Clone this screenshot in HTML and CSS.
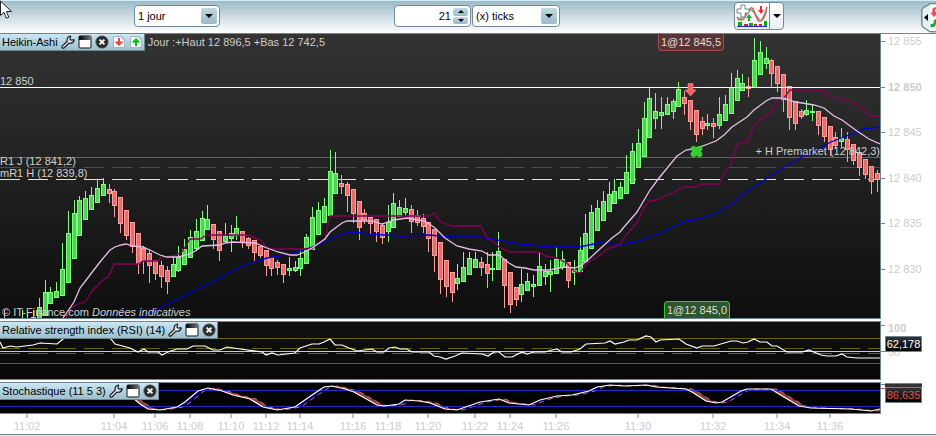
FILE: index.html
```html
<!DOCTYPE html>
<html lang="fr">

<head>
    <meta charset="UTF-8" />
    <meta name="viewport" content="width=device-width, initial-scale=1.0" />
    <title>Graphique 21 ticks</title>
    <link rel="stylesheet" href="styles.css">
</head>

<body>
    <svg class="symbols" aria-hidden="true">
        <defs>
            <linearGradient id="gloss" x1="0" y1="0" x2="1" y2="0">
                <stop offset="0" stop-color="#000" />
                <stop offset="1" stop-color="#777" />
            </linearGradient>
            <symbol id="wrench" viewBox="0 0 14 14">
                <path d="M1.2 11.2 6.2 6.2C5.8 3.8 7 1.6 9.3 1L9.6 1.6 8.8 3.8 10.2 5.2 12.8 4.6 13.2 5.2C12.4 7.4 10.4 8.6 8 8L3 13C1.6 13.6.4 12.4 1.2 11.2Z" fill="#dceaf0" stroke="#111" stroke-width="1.1" />
            </symbol>
            <symbol id="window" viewBox="0 0 14 14">
                <rect x="1" y="1" width="12" height="12" rx="1" fill="#fff" stroke="#111" />
                <rect x="1" y="1" width="12" height="4" fill="url(#gloss)" />
            </symbol>
            <symbol id="close" viewBox="0 0 14 14">
                <circle cx="7" cy="7" r="6.3" fill="#2b2b2b" stroke="#777" stroke-width=".6" />
                <path d="M4.6 4.6 9.4 9.4M9.4 4.6 4.6 9.4" stroke="#fff" stroke-width="2" />
            </symbol>
            <symbol id="sell" viewBox="0 0 14 14">
                <path d="M1.5 1.5H10.5L12.5 3.5V12.5H1.5Z" fill="#f4f8fa" stroke="#9db5c5" />
                <path d="M10 1.5V4H12.5" fill="none" stroke="#9db5c5" />
                <path d="M6 3H8V6.5H11.5L7 11 2.5 6.5H6Z" fill="#e84545" />
            </symbol>
            <symbol id="buy" viewBox="0 0 14 14">
                <path d="M1.5 1.5H10.5L12.5 3.5V12.5H1.5Z" fill="#f4f8fa" stroke="#9db5c5" />
                <path d="M10 1.5V4H12.5" fill="none" stroke="#9db5c5" />
                <path d="M6 11H8V7.5H11.5L7 3 2.5 7.5H6Z" fill="#00c400" />
            </symbol>
        </defs>
    </svg>

    <header class="toolbar">
        <span class="combo combo-period">
            <select aria-label="Période">
                <option>1 jour</option>
            </select>
        </span>
        <span class="spinner">
            <input type="text" value="21" aria-label="Nombre de ticks" />
            <span class="spinner-buttons">
                <button type="button" aria-label="Augmenter"></button>
                <button type="button" aria-label="Diminuer"></button>
            </span>
        </span>
        <span class="combo combo-unit">
            <select aria-label="Unité">
                <option>(x) ticks</option>
            </select>
        </span>
        <span class="indicator">
            <button type="button" aria-label="Ajouter un indicateur">
                <svg width="34" height="26" viewBox="0 0 34 26">
                    <path d="M3 17C8 16 10 7 15 7S22 17 26 17 30 9 32 8" fill="none" stroke="#4aa84a" stroke-width="1.5" />
                    <path d="M15 7C20 8 21 19 25 18S30 12 32 7L25 17Z" fill="#c5e8c5" />
                    <path d="M2 14C7 21 10 14 13 9S17 3 19 8 23 20 26 18 30 10 32 4" fill="none" stroke="#d95b62" stroke-width="1.5" />
                    <path d="M6 2H10V6H14V10H10V14H6V10H2V6H6Z" fill="#fff" stroke="#6f8997" />
                    <path d="M13 18V15H11L14 11 17 15H15V18Z" fill="#12b912" />
                    <path d="M25 3H27V7H29L26 11 23 7H25Z" fill="#e52b34" />
                    <path d="M3 19H7V23H3ZM14 20H18V23H14ZM29 18H32V23H29Z" fill="#00b400" />
                    <path d="M9 21H13V23H9ZM19 21H22V23H19ZM24 21H27V23H24Z" fill="#d22" />
                    <path d="M2 23.500H32" stroke="#2525d8" />
                </svg>
            </button>
            <button type="button" class="indicator-more" aria-label="Plus"></button>
        </span>
        <button type="button" class="side-tab" aria-label="Ouvrir le panneau d'ordres">
            <svg width="15" height="30" viewBox="0 0 15 30">
                <path d="M15 .8H9L2 5Q.8 6 .8 8V21Q.8 23 2 24L9 28.8H15" fill="#e4f0f4" stroke="#748d98" stroke-width="1.4" />
                <path d="M9 1.5H15V28H9Z" fill="#f7fbfc" />
                <path d="M7 11V18L3 14.500Z" fill="#000" />
                <path d="M15 4Q10 5 11.500 9L9.500 10 13 14 15 12V9Q13 8 15 6Z" fill="#e8525c" />
                <path d="M15 16 12 18 13 19Q13 21 9.500 21V24Q14 25 15 21Z" fill="#12b030" />
            </svg>
        </button>
        <svg class="cursor" width="13" height="20" viewBox="0 0 13 20" aria-hidden="true">
            <path d="M.5 1V15.500L4 12.300 6.300 18.200 8.800 17.200 6.400 11.500H11.500Z" fill="#fff" stroke="#222" />
        </svg>
    </header>

    <main>
        <section class="panel price">
            <div class="plot">
                <svg class="drawing">
                    <g id="levels"></g>
                    <svg id="pricePlot" width="100%" height="100%" viewBox="0 34 880 284" preserveAspectRatio="none"></svg>
                    <g class="labels">
                        <text x="0" y="51">12 850</text>
                        <text x="0" y="131">R1 J (12 841,2)</text>
                        <text x="0" y="143">mR1 H (12 839,8)</text>
                        <text x="100%" y="121" text-anchor="end">+ H Premarket (12 842,3)</text>
                    </g>
                </svg>
                <div class="legend">
                    <span>Heikin-Ashi</span>
                    <button type="button" aria-label="Configurer"><svg><use href="#wrench" /></svg></button>
                    <button type="button" aria-label="Agrandir"><svg><use href="#window" /></svg></button>
                    <button type="button" aria-label="Fermer"><svg><use href="#close" /></svg></button>
                    <button type="button" aria-label="Vendre"><svg><use href="#sell" /></svg></button>
                    <button type="button" aria-label="Acheter"><svg><use href="#buy" /></svg></button>
                    <p class="day-range">Jour :+Haut 12 896,5 +Bas 12 742,5</p>
                </div>
                <span class="order order-sell">1@12 845,5</span>
                <span class="order order-buy">1@12 845,0</span>
                <p class="credit">© IT-Finance.com <em>Données indicatives</em></p>
            </div>
            <svg class="scale" id="priceScale"></svg>
        </section>

        <section class="panel rsi">
            <div class="plot">
                <svg class="drawing" id="rsiPlot" viewBox="0 322 880 57" preserveAspectRatio="none"></svg>
                <div class="legend">
                    <span>Relative strength index (RSI) (14)</span>
                    <button type="button" aria-label="Configurer"><svg><use href="#wrench" /></svg></button>
                    <button type="button" aria-label="Agrandir"><svg><use href="#window" /></svg></button>
                    <button type="button" aria-label="Fermer"><svg><use href="#close" /></svg></button>
                </div>
            </div>
            <div class="side">
                <svg class="scale" id="rsiScale"></svg>
                <output class="value">62,178</output>
            </div>
        </section>

        <section class="panel stoch">
            <div class="plot">
                <svg class="drawing" id="stochPlot" viewBox="0 383 880 30" preserveAspectRatio="none"></svg>
                <div class="legend">
                    <span>Stochastique (11 5 3)</span>
                    <button type="button" aria-label="Configurer"><svg><use href="#wrench" /></svg></button>
                    <button type="button" aria-label="Agrandir"><svg><use href="#window" /></svg></button>
                    <button type="button" aria-label="Fermer"><svg><use href="#close" /></svg></button>
                </div>
            </div>
            <div class="side">
                <svg class="scale" id="stochScale"></svg>
                <output class="value">86,635</output>
            </div>
        </section>

        <svg class="time-scale" id="timeScale"></svg>
    </main>
    <footer></footer>

    <script src="chart.js"></script>
</body>

</html>
```

FILE: styles.css
```css
body {
    margin: 0;
    background: #fff;
    font-family: "Liberation Sans", Arial, sans-serif;
    font-size: 11px;
    overflow: hidden;
}

p {
    margin: 0;
}

button {
    padding: 0;
    border: none;
    background: none;
    cursor: pointer;
}

.symbols {
    position: absolute;
    width: 0;
    height: 0;
}

/* toolbar */
.toolbar {
    position: relative;
    display: flex;
    align-items: flex-start;
    box-sizing: border-box;
    height: 34px;
    padding: 1px 0 0 134px;
    border-top: 1px solid #d3edf8;
    border-bottom: 1px solid #6c878f;
    background: linear-gradient(#9cbac8, #fff);
}

.combo,
.spinner {
    position: relative;
    display: flex;
    box-sizing: border-box;
    height: 22px;
    margin-top: 3px;
    border: 1px solid #74899a;
    border-radius: 4px;
    background: #fff;
}

.combo-period {
    width: 86px;
}

.combo-unit {
    width: 88px;
    margin-left: 1px;
}

.combo select,
.spinner input {
    width: 100%;
    padding: 0 3px;
    border: none;
    background: none;
    appearance: none;
    color: #000;
    font: 11px "Liberation Sans", Arial, sans-serif;
    outline: none;
}

.combo::after {
    content: "";
    position: absolute;
    top: 2px;
    right: 2px;
    width: 16px;
    height: 16px;
    border-radius: 2px;
    background: linear-gradient(#bcd9e4, #9bbac7);
    pointer-events: none;
}

.combo::before {
    content: "";
    position: absolute;
    z-index: 1;
    top: 8px;
    right: 6px;
    border: 4px solid transparent;
    border-top-color: #000;
    border-bottom: none;
    pointer-events: none;
}

.spinner {
    width: 77px;
    margin-left: 174px;
}

.spinner input {
    min-width: 0;
    text-align: right;
    padding: 0;
}

.spinner-buttons {
    display: flex;
    flex-direction: column;
    gap: 1px;
    padding: 2px;
}

.spinner-buttons button {
    display: flex;
    align-items: center;
    justify-content: center;
    width: 15px;
    height: 8px;
    border-radius: 2px;
    background: linear-gradient(#bcd9e4, #9bbac7);
}

.spinner-buttons button::after {
    content: "";
    border: 3px solid transparent;
    border-top: none;
    border-bottom-color: #000;
}

.spinner-buttons button:last-child::after {
    border-top: 3px solid #000;
    border-bottom: none;
}

.indicator {
    display: flex;
    box-sizing: border-box;
    width: 50px;
    height: 28px;
    margin-left: 174px;
    border: 1px solid #74899a;
    border-radius: 4px;
    background: linear-gradient(#fff, #e8eff2);
}

.indicator svg {
    display: block;
}

.indicator-more {
    display: flex;
    flex: 1;
    align-items: center;
    justify-content: center;
    border-left: 1px solid #74899a;
}

.indicator-more::after {
    content: "";
    border: 4px solid transparent;
    border-top-color: #000;
    border-bottom: none;
}

.side-tab {
    margin: 1px 0 0 auto;
}

.side-tab svg {
    display: block;
}

.cursor {
    position: absolute;
    top: -1px;
    left: 0;
}

/* chart panels */
.panel {
    display: grid;
    grid-template-columns: 1fr 55px;
    margin-bottom: 2px;
}

.plot {
    position: relative;
    overflow: hidden;
    border-right: 1px solid #6c878f;
    border-bottom: 1px solid #6c878f;
    background: #070707;
}

.price .plot {
    height: 284px;
    background: linear-gradient(#333, #0e0e0e);
}

.rsi .plot,
.stoch .plot {
    border-top: 1px solid #6c878f;
}

.rsi .plot {
    height: 57px;
    background: linear-gradient(#111, #070707);
}

.stoch .plot {
    height: 30px;
    background: #030303;
}

.drawing {
    display: block;
    width: 100%;
    height: 100%;
}

.labels {
    fill: #d0d0d0;
    font-size: 11px;
}

.legend {
    position: absolute;
    top: 0;
    left: 0;
    display: flex;
    align-items: center;
    gap: 3px;
    box-sizing: border-box;
    height: 17px;
    padding: 0 1px 0 2px;
    border-right: 1px solid #6c878f;
    border-bottom: 1px solid #6c878f;
    background: linear-gradient(#c9e7f4, #9ebecb);
    color: #000;
    white-space: nowrap;
}

.legend svg {
    display: block;
    width: 14px;
    height: 14px;
}

.day-range {
    position: absolute;
    left: 100%;
    margin-left: 4px;
    color: #ccc;
}

.order {
    position: absolute;
    box-sizing: border-box;
    width: 66px;
    height: 17px;
    line-height: 16px;
    color: #e0dcdc;
    text-align: center;
}

.order-sell {
    top: 0;
    right: 156px;
    border: 1px solid #a34a4c;
    border-top: none;
    border-radius: 0 0 4px 4px;
    background: #593436;
}

.order-buy {
    right: 150px;
    bottom: 0;
    border: 1px solid #32cd32;
    border-bottom: none;
    border-radius: 4px 4px 0 0;
    background: #2b552b;
}

.credit {
    position: absolute;
    bottom: 0;
    left: 2px;
    line-height: 12px;
    color: #d0d0d0;
}

/* scales */
.scale {
    display: block;
    width: 55px;
    height: 285px;
}

.rsi .scale {
    height: 59px;
}

.stoch .scale {
    height: 32px;
}

.scale text,
.time-scale text {
    fill: #ccc;
    font-size: 11px;
}

.scale .major {
    font-weight: bold;
}

.side {
    position: relative;
}

.value {
    position: absolute;
    left: 4px;
    box-sizing: border-box;
    width: 37px;
    height: 16px;
    border: 1px solid #6c878f;
    background: linear-gradient(#333, #000);
    color: #fff;
    line-height: 15px;
    text-align: center;
}

.rsi .value {
    top: 15px;
}

.stoch .value {
    top: 5px;
    color: #e0504e;
    box-shadow: 0 -3px #333, 0 -4px #6c878f;
}

.time-scale {
    display: block;
    width: calc(100% - 55px);
    height: 20px;
    margin-top: -2px;
    overflow: visible;
}

footer {
    height: 1px;
    border-top: 1px solid #6c878f;
    background: #d3edf8;
}
```

FILE: chart.js
```js
// one candle per row: direction, x, high, top, bottom, low
const candles = `
r 4 310 318 318 318
g 22 310 318 318 318
g 27 313 318 318 318
g 33 310 317 318 318
g 39 298 307 318 318
g 45 280 292 315 315
g 50 287 292 303 304
g 56 282 291 297 297
g 62 243 269 295 295
g 68 211 233 282 283
g 74 200 213 258 258
g 79 196 200 235 236
g 85 191 198 219 219
g 91 187 195 209 209
g 97 180 188 202 202
g 103 178 184 195 195
r 109 184 189 193 203
r 114 189 191 205 217
r 120 197 197 223 233
r 126 210 210 235 240
r 132 222 222 246 253
r 138 233 233 263 274
r 143 246 248 260 274
r 149 249 253 265 283
r 155 260 260 273 280
r 161 261 265 276 288
r 167 266 270 281 294
g 173 255 264 276 276
g 178 246 257 270 272
g 184 239 249 264 264
g 190 230 237 257 257
g 196 219 231 248 251
g 202 211 218 240 240
g 207 205 219 229 229
r 213 224 224 239 249
r 219 231 231 250 261
g 225 223 236 241 242
g 231 225 233 238 252
g 236 216 228 235 240
r 242 231 231 242 248
r 248 237 238 245 249
r 254 240 240 252 261
r 260 246 246 255 258
r 266 250 250 265 276
r 271 257 257 268 276
r 277 260 262 267 275
r 283 264 264 274 283
g 289 257 268 270 276
g 295 261 267 270 272
g 300 249 258 268 276
g 306 234 237 263 263
g 312 207 217 249 249
g 318 202 210 234 234
g 324 198 206 222 222
g 330 150 171 215 215
g 335 152 173 193 194
r 341 175 183 186 194
r 347 182 184 195 212
r 353 189 189 213 223
r 359 201 201 227 240
r 364 209 213 219 224
r 370 217 217 223 235
r 376 219 219 231 242
r 382 223 225 237 244
g 388 205 222 231 242
g 393 193 203 227 227
g 399 200 207 216 216
g 405 198 208 212 216
r 411 205 209 221 233
r 417 210 215 222 226
r 423 214 218 226 233
r 428 222 222 238 252
r 434 229 229 255 272
r 440 242 242 279 294
r 446 260 260 286 297
r 452 272 272 292 302
g 457 264 278 283 290
g 463 252 267 281 281
g 469 252 258 274 274
g 475 252 259 267 267
r 481 257 262 267 276
r 487 252 264 273 288
g 492 252 268 269 281
g 498 232 251 269 269
r 504 259 259 285 308
r 510 272 272 304 313
r 516 287 287 299 306
g 521 269 284 294 302
g 527 273 281 290 290
g 533 275 284 286 297
g 539 253 266 285 285
g 545 264 271 276 285
g 550 260 271 274 292
g 556 246 259 273 273
g 562 251 259 267 270
r 568 262 262 280 288
g 574 260 270 272 285
g 580 237 250 271 271
g 585 214 233 261 261
g 591 205 212 248 248
g 597 200 208 230 230
g 603 191 201 220 220
g 609 182 194 211 211
g 614 179 191 203 203
g 620 182 187 198 198
g 626 155 172 193 193
g 632 143 151 183 183
g 638 129 143 167 167
g 644 102 118 156 156
g 649 88 98 137 137
g 655 93 111 118 129
g 661 97 112 115 129
g 667 97 104 114 114
g 673 99 101 111 119
g 678 82 89 106 106
r 684 91 97 103 115
r 690 100 100 121 130
r 696 110 110 134 142
r 702 117 121 128 135
g 707 114 123 125 130
r 713 118 123 126 138
g 719 97 114 125 129
g 725 95 104 120 120
g 731 73 87 113 113
g 737 70 78 100 100
g 742 74 83 90 90
r 748 77 86 88 97
g 754 38 60 87 87
g 760 41 52 74 74
g 766 47 58 63 69
r 771 59 60 73 88
r 777 66 66 83 92
r 783 74 74 99 112
r 789 86 86 117 130
r 795 101 101 123 130
r 801 109 111 116 119
g 806 100 110 114 116
g 812 105 111 112 121
r 818 111 111 125 135
r 824 117 117 136 142
r 830 126 126 149 156
r 835 132 137 145 149
g 841 128 138 141 147
r 847 132 139 149 162
r 853 144 144 160 165
r 859 152 152 167 176
r 865 159 159 174 179
r 871 166 166 181 194
r 877 170 173 179 192`.trim().split('\n').map(row => row.split(' '));

const average = '63,318 74,302 80,288 90,275 100,262 110,250 115,247 121,245 126,244 133,246 143,247 152,251 160,255 167,257 178,257 190,254 197,250 202,246 220,245 225,243 233,242 255,243 267,248 278,252 290,255 297,255 305,252 312,248 325,239 330,232 342,223 347,221 372,221 382,224 394,220 407,218 425,221 435,228 445,238 457,246 469,249 482,251 489,255 499,255 509,263 516,267 525,268 534,270 549,270 565,267 575,268 582,265 589,259 602,247 612,238 620,232 624,227 637,212 650,190 659,178 677,156 686,150 697,148 716,141 724,135 732,127 747,117 754,110 766,101 772,98 782,98 796,102 814,105 824,108 834,116 842,120 857,131 869,139 880,144';

const kijun = '66,318 72,307 78,304 86,301 92,291 103,280 109,276 114,264 139,264 143,261 157,261 162,257 173,256 182,252 190,239 200,239 207,235 248,235 262,241 266,247 273,249 312,249 318,243 325,239 330,216 429,216 434,213 441,222 452,226 481,226 487,238 494,242 499,247 510,252 540,252 545,256 557,258 567,263 575,272 580,273 587,263 597,257 609,248 620,245 624,238 638,221 644,208 649,201 656,200 674,192 684,187 696,187 702,184 719,184 726,170 731,165 737,144 748,141 754,126 761,119 771,113 777,99 784,98 790,90 825,90 830,97 841,98 847,101 853,102 859,107 864,109 870,116 880,116';

const slowAverage = '137,318 160,308 180,298 200,288 220,278 240,267 253,262 267,258 290,254 312,247 325,242 342,234 354,232 369,234 402,236 429,235 452,237 479,237 492,239 519,244 552,247 579,247 599,243 624,244 639,241 649,237 661,233 674,226 687,221 699,219 719,212 734,202 749,190 766,179 784,167 804,156 831,142 854,133 864,129 880,127';

const rsi = '0,342 3,348 10,346 17,347 33,345 40,343 57,344 63,339 73,335 100,336 111,339 115,344 130,348 138,352 144,349 148,352 158,352 162,355 168,352 177,349 187,349 193,346 205,346 213,350 220,350 227,347 240,349 262,352 266,355 272,353 278,355 295,353 300,348 312,344 319,344 324,342 330,339 335,345 342,345 349,348 357,351 372,349 377,352 384,352 389,348 395,347 400,349 407,349 412,352 429,352 434,356 440,357 446,359 455,356 462,353 482,354 488,356 494,352 499,352 505,357 512,357 522,352 527,354 534,352 545,352 552,350 557,349 562,352 571,352 580,349 586,344 605,343 610,341 615,344 624,342 629,340 637,340 646,336 651,337 656,342 660,340 679,339 686,344 697,348 702,346 714,346 731,341 737,341 743,343 748,342 754,339 760,342 767,342 772,346 777,346 787,352 802,352 809,350 821,355 827,356 836,356 842,354 847,357 857,358 880,358';

const stoch = '132,397 140,404 148,409 160,410 177,407 185,402 198,391 208,388 222,391 233,395 250,399 263,407 277,410 295,407 302,402 312,395 324,387 332,386 345,389 354,392 377,405 384,406 399,404 405,400 419,401 430,403 445,409 457,410 480,402 499,399 509,403 529,405 540,400 557,396 572,395 589,391 597,387 610,385 624,386 646,385 656,387 686,389 692,392 706,401 716,403 722,402 741,391 747,389 771,389 779,394 799,406 811,408 851,409 871,411 880,409';

const times = [[27, '11:02'], [114, '11:04'], [155, '11:06'], [190, '11:08'], [231, '11:10'], [266, '11:12'], [300, '11:14'], [353, '11:16'], [388, '11:18'], [428, '11:20'], [475, '11:22'], [510, '11:24'], [556, '11:26'], [638, '11:30'], [713, '11:32'], [777, '11:34'], [830, '11:36']];

const prices = [[7, '12 855'], [53, '12 850'], [98, '12 845'], [144, '12 840'], [189, '12 835'], [235, '12 830']];

function fill(id, markup) {
    document.getElementById(id).innerHTML = markup;
}

function level(y, color, dash = '') {
    return `<line x1="0" x2="100%" y1="${y}.5" y2="${y}.5" stroke="${color}" stroke-dasharray="${dash}"/>`;
}

function curve(points, color, extra = '') {
    return `<polyline points="${points}" fill="none" stroke="${color}" ${extra}/>`;
}

function candle([direction, x, high, top, bottom, low]) {
    const edge = direction === 'g' ? '#7dff7d' : '#ff9e9c';
    const body = direction === 'g' ? '#50d252' : '#ec6c6c';
    const height = Math.max(bottom - top, 1);
    return `<path d="M${+x + 0.5} ${high}V${low}" stroke="${edge}"/>` +
        `<rect x="${x - 1.5}" y="${+top + 0.5}" width="4" height="${height}" fill="${body}" stroke="${edge}"/>`;
}

// the signal line trails the stochastic, the gap between them is coloured by direction
function stochArea(points) {
    const p = points.split(' ').map(pair => pair.split(',').map(Number));
    let out = '';
    for (let i = 1; i < p.length; i++) {
        const [x1, y1] = p[i - 1];
        const [x2, y2] = p[i];
        const color = y2 > y1 ? '#8c3f40' : '#00006e';
        out += `<path d="M${x1} ${y1}L${x2} ${y2}H${x2 + 6}L${x1 + 6} ${y1}Z" fill="${color}"/>`;
    }
    return out + curve(p.map(([x, y]) => [x + 6, y]).join(' '), '#e06464', 'stroke-dasharray="5 4"');
}

fill('levels',
    level(123, '#d92f2f') +
    level(133, '#804000', '20 8') +
    level(145, '#ff0', '20 8'));

fill('pricePlot',
    candles.map(candle).join('') +
    level(87, '#fff') +
    curve(slowAverage, '#0000d8', 'stroke-width="1.3"') +
    curve(kijun, '#860058', 'stroke-width="1.3"') +
    curve(average, '#e5bfe5', 'stroke-width="1.3"') +
    '<path d="M688 83.500H693V90H696L690.500 96 685 90H688Z" fill="#ff6262" stroke="#ff9e9c" stroke-width=".5"/>' +
    '<path d="M692 146.500H695L696.500 148 698 146.500H701L702 148V150L700.500 151.500 702 153V155L701 156.500H698L696.500 155 695 156.500H692L691 155V153L692.500 151.500 691 150V148Z" fill="#32cd32" stroke="#62e562" stroke-width=".5"/>');

fill('rsiPlot',
    level(338, '#666600') + level(363, '#666600') +
    level(348, '#666600', '20 8') + level(353, '#666600', '20 8') +
    level(351, '#ccc') + curve(rsi, '#fff', 'stroke-width="1.2"'));

fill('stochPlot', stochArea(stoch) + level(390, '#2a2ac8') + level(406, '#2a2ac8') +
    curve(stoch, '#fff', 'stroke-width="1.2"'));

fill('priceScale', prices.map(([y, label]) =>
    `<path d="M0 ${y}.5H4" stroke="#6c878f"/><text x="7" y="${y + 4}" class="${label === '12 850' ? 'major' : ''}">${label}</text>`).join(''));

fill('rsiScale',
    '<path d="M0 4.500H4M0 30.500H4" stroke="#6c878f"/><text x="7" y="11" class="major">100</text><text x="7" y="35">50</text>');

fill('stochScale', '<path d="M0 2.500H4" stroke="#6c878f"/><path d="M0 6.500H4" stroke="#e0504e"/>');

fill('timeScale', times.map(([x, label]) => {
    const left = x / 881 * 100;
    return `<line x1="${left}%" x2="${left}%" y1="0" y2="4" stroke="#6c878f"/>` +
        `<text x="${left}%" y="16" text-anchor="middle">${label}</text>`;
}).join(''));
```
